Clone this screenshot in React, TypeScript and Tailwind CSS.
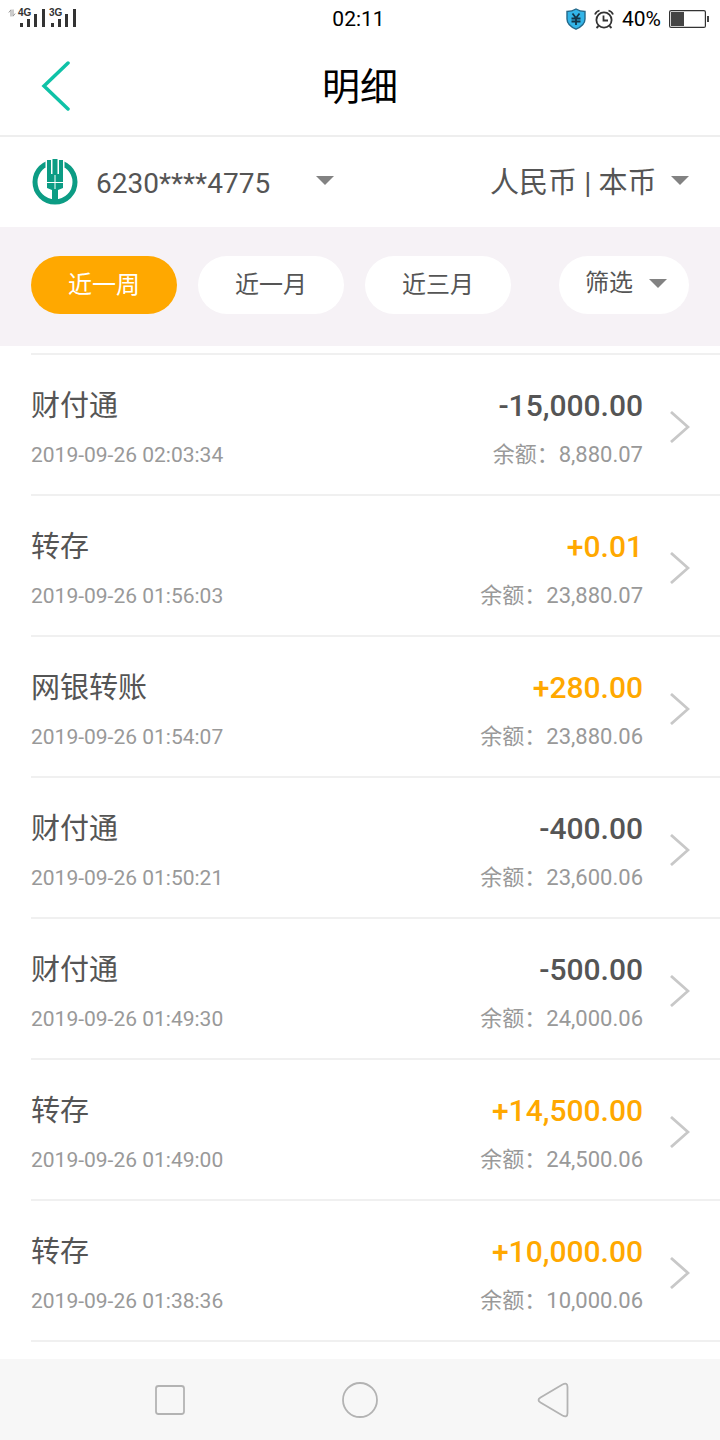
import { useState } from 'react'

type Transaction = {
  title: string
  time: string
  amount: string
  balance: string
}

const transactions: Transaction[] = [
  { title: '财付通', time: '2019-09-26 02:03:34', amount: '-15,000.00', balance: '8,880.07' },
  { title: '转存', time: '2019-09-26 01:56:03', amount: '+0.01', balance: '23,880.07' },
  { title: '网银转账', time: '2019-09-26 01:54:07', amount: '+280.00', balance: '23,880.06' },
  { title: '财付通', time: '2019-09-26 01:50:21', amount: '-400.00', balance: '23,600.06' },
  { title: '财付通', time: '2019-09-26 01:49:30', amount: '-500.00', balance: '24,000.06' },
  { title: '转存', time: '2019-09-26 01:49:00', amount: '+14,500.00', balance: '24,500.06' },
  { title: '转存', time: '2019-09-26 01:38:36', amount: '+10,000.00', balance: '10,000.06' },
]

const periods = ['近一周', '近一月', '近三月']

const Caret = ({ className = '' }: { className?: string }) => (
  <svg className={`h-[9px] w-[18px] fill-[#828282] ${className}`} viewBox="0 0 18 9" aria-hidden="true">
    <path d="M0 0h18L9 9z" />
  </svg>
)

const Signal = ({ label }: { label: string }) => (
  <div className="relative h-5 w-7">
    <span className="absolute top-0 left-0 font-['Liberation_Sans',sans-serif] text-[10px] leading-[8px] font-bold text-[#333]">
      {label}
    </span>
    <svg className="h-5 w-7 fill-[#333]" viewBox="0 0 28 20" aria-hidden="true">
      <path d="M2 14h3v4H2zM9 10h3v8H9zM16 5h3v13h-3zM24 0h3v18h-3z" />
    </svg>
  </div>
)

const StatusBar = () => (
  <div className="grid h-[38px] grid-cols-[1fr_auto_1fr] items-center pr-[11px] pl-2 text-[21px] leading-6 text-black">
    <div className="flex items-center">
      <svg className="mb-3 h-2 w-2" viewBox="0 0 8 8" fill="none" stroke="#999" aria-hidden="true">
        <path d="M3 7.500V.8L.8 3.500M5 .5v6.700l2.200-2.700" />
      </svg>
      <div className="flex gap-[3px] pl-[2px]">
        <Signal label="4G" />
        <Signal label="3G" />
      </div>
    </div>
    <span>02:11</span>
    <div className="flex items-center justify-end gap-2">
      <svg className="h-[22px] w-5" viewBox="0 0 20 22" aria-hidden="true">
        <path
          d="M10 1c3 2 6 2.500 9 2.500V11c0 5-4 8-9 10.200C5 19 1 16 1 11V3.500C4 3.500 7 3 10 1z"
          fill="#33b5e8"
          stroke="#23688a"
          strokeWidth="1.400"
        />
        <path d="M6.500 5.500 10 10l3.500-4.500M5.500 10.500h9M5.500 13.500h9M10 10v7" stroke="#12364a" strokeWidth="1.800" fill="none" />
      </svg>
      <svg className="h-5 w-5" viewBox="0 0 20 20" fill="none" stroke="#333" strokeWidth="1.800" aria-hidden="true">
        <circle cx="10" cy="11" r="7.600" />
        <path d="M9.500 6.500V11.500H14M1 5.500Q2 2.500 5.500 1.500M19 5.500Q18 2.500 14.500 1.500M4.500 17l-2 2M15.500 17l2 2" />
      </svg>
      <span>40%</span>
      <svg className="h-[18px] w-10" viewBox="0 0 40 18" aria-hidden="true">
        <rect x=".6" y=".6" width="35.800" height="16.800" rx="1.500" fill="none" stroke="#333" strokeWidth="1.200" />
        <path d="M2 2h13v14H2zM38 6h2v6h-2z" fill="#444" />
      </svg>
    </div>
  </div>
)

const BankLogo = () => (
  <svg className="h-[46px] w-[46px]" viewBox="0 0 46 46" aria-hidden="true">
    <circle cx="23" cy="23" r="20" fill="none" stroke="#0c9c84" strokeWidth="5" />
    <path d="M13.500 0h19v8h-19z" fill="#fff" />
    <path d="M15 1h4v14h1.500V0h5v15H27V1h4v28l-5 2v14h-6V31l-5-2z" fill="#0c9c84" />
    <path d="M15 23.500h16M23 16v14" stroke="#fff" strokeWidth="1" />
  </svg>
)

const Header = () => (
  <header className="grid h-[99px] grid-cols-[1fr_auto_1fr] items-center border-b-2 border-[#eee] px-10">
    <button type="button" aria-label="返回" className="mb-0.5 justify-self-start">
      <svg className="h-[50px] w-8" viewBox="0 0 32 50" fill="none" aria-hidden="true">
        <path d="M28 2 4 25l24 23" stroke="#0fc2a7" strokeWidth="3.500" strokeLinecap="round" />
      </svg>
    </button>
    <h1 className="text-[38px] leading-[50px] text-black">明细</h1>
  </header>
)

const AccountBar = () => (
  <div className="flex h-[90px] items-center justify-between pr-[31px] pl-8 text-[#555]">
    <div className="flex items-center gap-[18px]">
      <BankLogo />
      <div className="relative flex items-center">
        <select aria-label="账户" className="h-12 appearance-none bg-transparent pt-1 pr-[63px] text-[28px]">
          <option>6230****4775</option>
        </select>
        <Caret className="pointer-events-none absolute right-0 mb-1" />
      </div>
    </div>
    <div className="relative flex items-center">
      <select aria-label="币种" className="h-12 appearance-none bg-transparent pt-1 pr-8 text-[29px]">
        <option>人民币 | 本币</option>
      </select>
      <Caret className="pointer-events-none absolute right-0 mb-1" />
    </div>
  </div>
)

const FilterBar = () => {
  const [active, setActive] = useState(periods[0])

  return (
    <div className="flex h-[119px] items-start justify-between bg-[#f6f2f6] px-[31px] pt-[29px] text-2xl text-[#555]">
      <div className="flex gap-[21px]">
        {periods.map((period) => (
          <button
            key={period}
            type="button"
            aria-pressed={period === active}
            onClick={() => setActive(period)}
            className={`h-[58px] w-[146px] rounded-full ${period === active ? 'bg-[#ffa800] text-white' : 'bg-white'}`}
          >
            {period}
          </button>
        ))}
      </div>
      <button type="button" className="flex h-[58px] w-[130px] items-center justify-center gap-4 rounded-full bg-white pb-1 pl-1">
        筛选
        <Caret />
      </button>
    </div>
  )
}

const TransactionRow = ({ title, time, amount, balance }: Transaction) => (
  <li className="border-b-2 border-[#f0f0f0]">
    <a href="#detail" className="flex items-center pt-[31px] pr-[30px] pb-[25px]">
      <div className="flex flex-1 flex-col gap-[15px]">
        <span className="text-[29px] leading-10 text-[#555]">{title}</span>
        <time className="text-[21px] leading-7 text-[#999]">{time}</time>
      </div>
      <div className="flex flex-col gap-[15px] text-right">
        <span
          className={`text-[30px] leading-10 font-medium ${amount.startsWith('+') ? 'text-[#ffa800]' : 'text-[#555]'}`}
        >
          {amount}
        </span>
        <span className="text-[22px] leading-7 text-[#999]">余额：{balance}</span>
      </div>
      <svg className="mb-0.5 ml-[27px] h-8 w-5" viewBox="0 0 20 32" fill="none" aria-hidden="true">
        <path d="M1 1l17 15L1 31" stroke="#c8c8c8" strokeWidth="2.800" />
      </svg>
    </a>
  </li>
)

const NavigationBar = () => (
  <nav className="mt-auto grid h-[81px] grid-cols-3 items-center justify-items-center bg-[#f7f7f7] px-[74px]">
    <button type="button" aria-label="最近任务">
      <svg className="h-9 w-9" viewBox="0 0 36 36" fill="none" stroke="#b3b3b3" strokeWidth="1.800" aria-hidden="true">
        <rect x="5" y="4" width="28" height="28" rx="2.500" />
      </svg>
    </button>
    <button type="button" aria-label="主屏幕">
      <svg className="h-9 w-9" viewBox="0 0 36 36" fill="none" stroke="#b3b3b3" strokeWidth="1.800" aria-hidden="true">
        <circle cx="18" cy="18" r="17" />
      </svg>
    </button>
    <button type="button" aria-label="返回上一页">
      <svg className="h-9 w-9" viewBox="0 0 36 36" fill="none" stroke="#b3b3b3" strokeWidth="1.800" aria-hidden="true">
        <path d="M7.500 15.500 29.500 2.500Q34.500 0 34.500 5V31Q34.500 36 29.500 33.500L7.500 20.500Q3.500 18 7.500 15.500z" />
      </svg>
    </button>
  </nav>
)

export default function App() {
  return (
    <div className="flex min-h-screen flex-col bg-white font-['Roboto','Noto_Sans_CJK_SC',sans-serif]" lang="zh-CN">
      <StatusBar />
      <Header />
      <AccountBar />
      <FilterBar />
      <main className="pt-[7px] pb-[17px] pl-[31px]">
        <ul className="border-t-2 border-[#f0f0f0]">
          {transactions.map((transaction) => (
            <TransactionRow key={transaction.time} {...transaction} />
          ))}
        </ul>
      </main>
      <NavigationBar />
    </div>
  )
}
